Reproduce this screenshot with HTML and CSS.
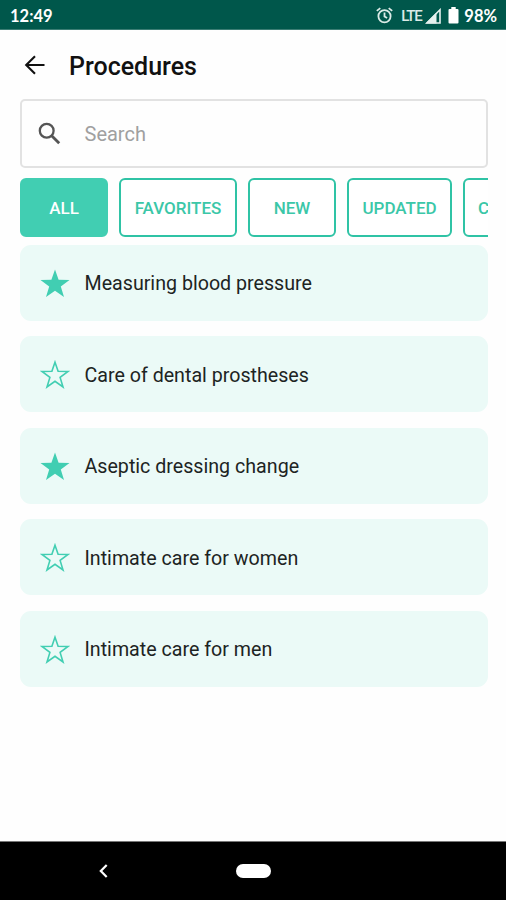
FILE: index.html
```html
<!DOCTYPE html>
<html lang="en">
<head>
    <meta charset="UTF-8">
    <meta name="viewport" content="width=device-width, initial-scale=1.0">
    <title>Procedures</title>
    <link rel="stylesheet" href="styles.css">
</head>
<body>
    <!-- Shared star icons -->
    <svg width="0" height="0" class="sprite">
        <symbol id="star" viewBox="0 0 30 29">
            <path d="M15 .5l3.6 10.2 10.9.2-8.7 6.5 3.2 10.7-9-6.3-9 6.3 3.2-10.7L.5 10.9l10.9-.2z"/>
        </symbol>
        <symbol id="star-outline" viewBox="0 0 30 29">
            <path d="M15 2.2l3.1 9.1 10 .2-8 5.9 2.9 9.5-8-5.6-8 5.6 2.9-9.5-8-5.9 10-.2z" fill="none" stroke="currentColor" stroke-width="1.6"/>
        </symbol>
    </svg>

    <div class="status-bar">
        <span class="time">12:49</span>
        <div class="status-icons">
            <svg class="alarm" width="17" height="17" viewBox="0 0 17 17" fill="none" stroke="#dcebe7" stroke-width="1.8">
                <circle cx="8.5" cy="9.2" r="6.1"/>
                <path d="M8.5 5.5v4l2.6 1.6M.8 3.9l3.5-2.8M16.2 3.9l-3.5-2.8"/>
            </svg>
            <span class="network">LTE</span>
            <svg class="signal" width="16" height="16" viewBox="0 0 16 16">
                <path d="M15 1.8V15H1.8z" fill="none" stroke="#e6f0ee" stroke-width="1.6"/>
                <path d="M11.5 4.5V15.5H.5z" fill="#e6f0ee"/>
            </svg>
            <svg class="battery" width="11" height="17" viewBox="0 0 11 17">
                <path d="M3.3 0h4.4v2H9.5Q10.5 2 10.5 3v12.5q0 1-1 1h-8q-1 0-1-1V3q0-1 1-1h1.8z" fill="#fff"/>
            </svg>
            <span class="percent">98%</span>
        </div>
    </div>

    <header class="header">
        <svg width="22" height="20" viewBox="0 0 22 20" fill="none" stroke="#111" stroke-width="2.1">
            <path d="M20.5 10H2.5M11 1.2L2.2 10l8.8 8.8"/>
        </svg>
        <h1>Procedures</h1>
    </header>

    <main class="content">
        <div class="search">
            <svg width="23" height="23" viewBox="0 0 23 23" fill="none" stroke="#555" stroke-width="2.3">
                <circle cx="8.7" cy="8.7" r="6.9"/>
                <path d="M13.7 13.7l7.5 7.5" stroke-width="2.8"/>
            </svg>
            <span>Search</span>
        </div>

        <div class="filters">
            <button class="filter all active">ALL</button>
            <button class="filter favorites">FAVORITES</button>
            <button class="filter new">NEW</button>
            <button class="filter updated">UPDATED</button>
            <button class="filter more">C</button>
        </div>

        <div class="list">
            <div class="item">
                <svg class="star"><use href="#star"/></svg>
                <span>Measuring blood pressure</span>
            </div>
            <div class="item">
                <svg class="star"><use href="#star-outline"/></svg>
                <span>Care of dental prostheses</span>
            </div>
            <div class="item">
                <svg class="star"><use href="#star"/></svg>
                <span>Aseptic dressing change</span>
            </div>
            <div class="item">
                <svg class="star"><use href="#star-outline"/></svg>
                <span>Intimate care for women</span>
            </div>
            <div class="item">
                <svg class="star"><use href="#star-outline"/></svg>
                <span>Intimate care for men</span>
            </div>
        </div>
    </main>

    <nav class="nav-bar">
        <svg width="9" height="14" viewBox="0 0 9 14" fill="none" stroke="#fff" stroke-width="2.2">
            <path d="M7.7 1L1.8 7l5.9 6"/>
        </svg>
        <div class="home"></div>
    </nav>
</body>
</html>
```
FILE: styles.css
```css
* {
    box-sizing: border-box;
}

body {
    margin: 0;
    height: 900px;
    display: flex;
    flex-direction: column;
    overflow: hidden;
    background: #fefefe;
    font-family: Roboto, sans-serif;
    color: #1d2423;
}

.sprite {
    position: absolute;
}

/* Status bar */
.status-bar {
    height: 30px;
    flex: none;
    display: flex;
    justify-content: space-between;
    align-items: center;
    padding: 2px 9px 0 10px;
    background: #00574b;
    border-bottom: 1px solid #3b7d74;
    color: #fff;
}

.time,
.percent {
    font-family: Lato, sans-serif;
    font-weight: 700;
    font-size: 16.5px;
}

.status-icons {
    display: flex;
    align-items: center;
}

.network {
    margin: 0 4px 0 8px;
    font-size: 15px;
    font-weight: 500;
    letter-spacing: -1.3px;
    color: #dcebe7;
}

.battery {
    margin: 0 5px 0 7px;
}

/* Header */
.header {
    height: 69px;
    flex: none;
    display: flex;
    align-items: center;
    padding: 1px 0 0 24px;
}

h1 {
    margin: 2px 0 0 23px;
    font-size: 25px;
    font-weight: 500;
    color: #111;
}

.content {
    flex: 1;
    padding: 0 18.5px 0 20px;
}

/* Search field */
.search {
    height: 69px;
    display: flex;
    align-items: center;
    padding-left: 16px;
    border: 2px solid #e2e2e2;
    border-radius: 5px;
    font-size: 20px;
    color: #a0a0a0;
}

.search span {
    margin: 1px 0 0 23.5px;
}

/* Filter buttons */
.filters {
    display: flex;
    gap: 11px;
    margin-top: 10px;
    overflow: hidden;
}

.filter {
    height: 59px;
    flex: none;
    padding: 1px 0 0;
    border: 2px solid #2fc3a5;
    border-radius: 6px;
    background: #fff;
    font-family: inherit;
    font-size: 17px;
    font-weight: 500;
    color: #3bc7a8;
}

.filter.active {
    border-color: #41ceb2;
    background: #41ceb2;
    color: #fff;
}

.all,
.new {
    width: 88px;
}

.favorites {
    width: 118px;
}

.updated {
    width: 105px;
}

.more {
    width: 100px;
    padding-left: 13px;
    text-align: left;
}

/* Procedure list */
.list {
    display: flex;
    flex-direction: column;
    gap: 15.5px;
    margin-top: 7.5px;
}

.item {
    height: 76px;
    display: flex;
    align-items: center;
    gap: 15px;
    padding: 1px 0 0 19.5px;
    border-radius: 11px;
    background: #ebfaf7;
    font-size: 19.65px;
}

.item span {
    margin-top: 1px;
}

.star {
    width: 30px;
    height: 29px;
    fill: #41ceb2;
    color: #41ceb2;
}

/* Navigation bar */
.nav-bar {
    height: 59px;
    flex: none;
    display: flex;
    align-items: center;
    padding-left: 99px;
    border-top: 1px solid #777;
    background: #000;
}

.home {
    width: 35px;
    height: 14px;
    margin-left: 128px;
    border-radius: 7px;
    background: #fff;
}
```
